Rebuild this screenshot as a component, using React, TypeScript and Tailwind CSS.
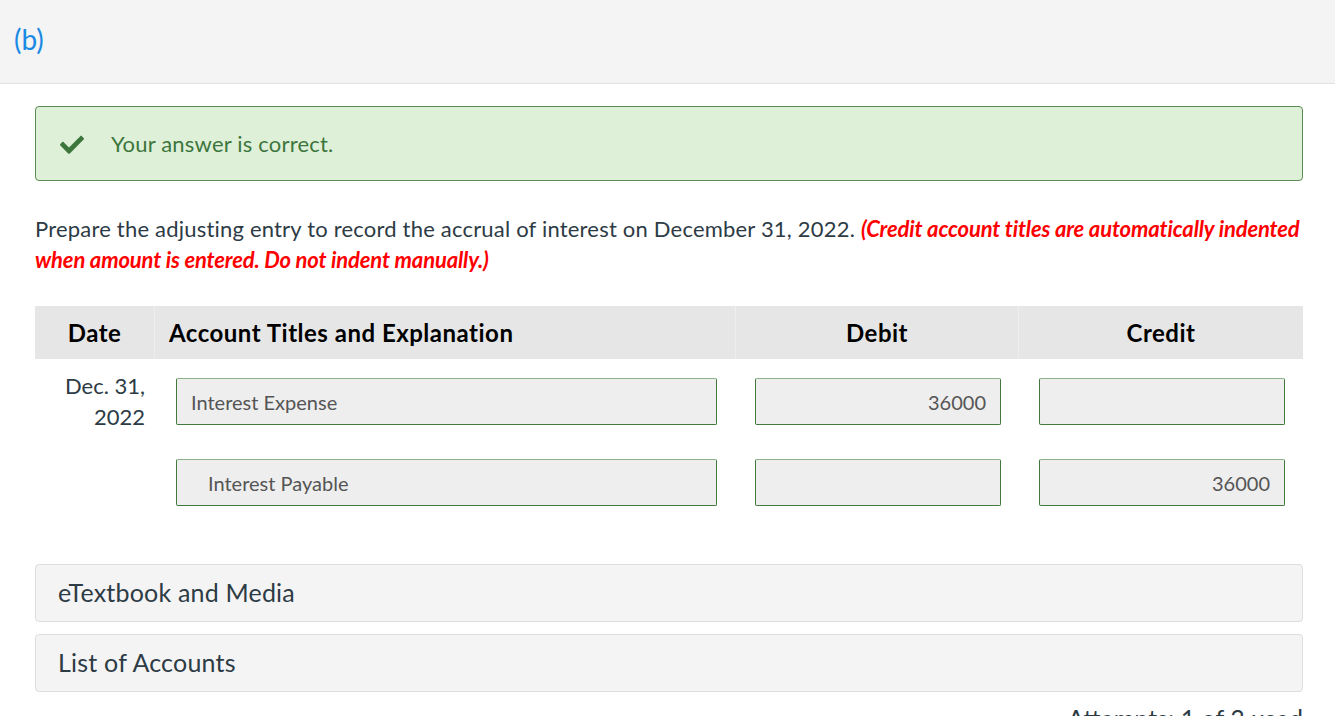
import React from "react";

const font = { fontFamily: "Lato, 'Open Sans', sans-serif" };

const Field: React.FC<{ value?: string; right?: boolean; indent?: boolean }> = ({ value, right, indent }) => (
  <div
    className={`h-[47px] flex items-center bg-[#eeeeee] border border-[#3f7a3c] border-t-[#8cb289] rounded-[2px] text-[20px] text-[#555555] ${
      right ? "justify-end pr-[14px]" : indent ? "pl-[31px]" : "pl-[14px]"
    }`}
  >
    {value}
  </div>
);

export default function App() {
  return (
    <div className="min-h-screen bg-white" style={font}>
      {/* part header */}
      <div className="h-[84px] bg-[#f4f4f4] border-b border-[#e2e2e2] pl-[14px] pt-[18px]">
        <span className="text-[28px] text-[#1b8ae4]">(b)</span>
      </div>

      <div className="ml-[35px] mr-[32px]">
        {/* correct notice */}
        <div className="mt-[22px] h-[75px] flex items-center bg-[#dff0d8] border border-[#5b8c53] rounded-[4px]">
          <svg className="ml-[24px] w-[24px] h-[20px]" viewBox="0 0 512 420" fill="#3c763d">
            <path d="M173.9 410.4 7.5 244c-10-10-10-26.2 0-36.2l36.2-36.2c10-10 26.2-10 36.2 0L192 283.7 432.1 43.5c10-10 26.2-10 36.2 0l36.2 36.2c10 10 10 26.2 0 36.2L210.1 410.4c-10 10-26.2 10-36.2 0z" />
          </svg>
          <span className="ml-[27px] text-[22px] tracking-[0.2px] text-[#3c763d]">Your answer is correct.</span>
        </div>

        {/* question text */}
        <p className="mt-[32px] text-[22px] leading-[31px] tracking-[0.2px] text-[#2d3b45]">
          Prepare the adjusting entry to record the accrual of interest on December 31, 2022.{" "}
          <span className="text-[#ff0000] font-bold italic tracking-[-0.15px]">
            (Credit account titles are automatically indented when amount is entered. Do not indent manually.)
          </span>
        </p>

        {/* journal table */}
        <div className="mt-[31px]">
          <div className="grid grid-cols-[120px_581px_283px_1fr] h-[53px] bg-[#e6e6e6] text-[24px] tracking-[0.5px] font-bold text-black">
            <div className="flex items-center justify-center border-r border-[#eeeeee]">Date</div>
            <div className="flex items-center pl-[14px] border-r border-[#eeeeee]">Account Titles and Explanation</div>
            <div className="flex items-center justify-center border-r border-[#eeeeee]">Debit</div>
            <div className="flex items-center justify-center">Credit</div>
          </div>

          <div className="grid grid-cols-[120px_581px_283px_1fr] items-start pt-[19px]">
            <div className="h-[47px] -mt-[8px] text-right pr-[10px] text-[22px] leading-[31px] text-[#2d3b45]">
              Dec. 31,
              <br />
              2022
            </div>
            <div className="pl-[21px] pr-[19px]">
              <Field value="Interest Expense" />
            </div>
            <div className="pl-[19px] pr-[18px]">
              <Field value="36000" right />
            </div>
            <div className="pl-[20px] pr-[18px]">
              <Field />
            </div>
          </div>

          <div className="grid grid-cols-[120px_581px_283px_1fr] pt-[34px]">
            <div />
            <div className="pl-[21px] pr-[19px]">
              <Field value="Interest Payable" indent />
            </div>
            <div className="pl-[19px] pr-[18px]">
              <Field />
            </div>
            <div className="pl-[20px] pr-[18px]">
              <Field value="36000" right />
            </div>
          </div>
        </div>

        {/* resources */}
        <div className="mt-[58px] flex flex-col gap-[12px]">
          <div className="h-[58px] flex items-center pl-[22px] bg-[#f4f4f4] border border-[#dddddd] rounded-[4px] text-[25px] tracking-[0.2px] text-[#2d3b45]">
            eTextbook and Media
          </div>
          <div className="h-[58px] flex items-center pl-[22px] bg-[#f4f4f4] border border-[#dddddd] rounded-[4px] text-[25px] tracking-[0.2px] text-[#2d3b45]">
            List of Accounts
          </div>
        </div>

        <div className="mt-[8px] text-right text-[25px] text-[#2d3b45]">Attempts: 1 of 3 used</div>
      </div>
    </div>
  );
}
